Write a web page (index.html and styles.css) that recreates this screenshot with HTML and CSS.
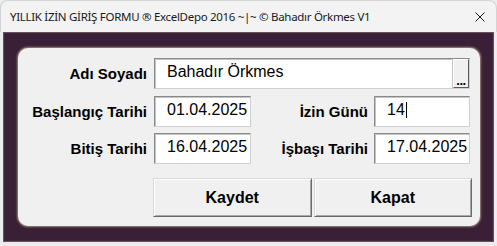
FILE: index.html
```html
<!DOCTYPE html>
<html lang="tr">
<head>
    <meta charset="UTF-8">
    <title>YILLIK İZİN GİRİŞ FORMU</title>
    <link rel="stylesheet" href="styles.css">
</head>
<body>
    <div class="window">
        <div class="titlebar">
            <span class="title">YILLIK İZİN GİRİŞ FORMU ® ExcelDepo 2016 ~|~ © Bahadır Örkmes V1</span>
            <svg class="close" width="10" height="10" viewBox="0 0 10 10">
                <path d="M0.5 0.5 L9.5 9.5 M9.5 0.5 L0.5 9.5" stroke="#1a1a1a" stroke-width="1" fill="none"/>
            </svg>
        </div>

        <div class="frame">
            <div class="panel">
                <div class="form">
                    <label class="lbl">Adı Soyadı</label>
                    <div class="field field-name">
                        <span>Bahadır Örkmes</span>
                        <span class="dots">...</span>
                    </div>

                    <label class="lbl">Başlangıç Tarihi</label>
                    <div class="field">01.04.2025</div>
                    <label class="lbl lbl-right">İzin Günü</label>
                    <div class="field">14<span class="caret"></span></div>

                    <label class="lbl">Bitiş Tarihi</label>
                    <div class="field">16.04.2025</div>
                    <label class="lbl lbl-right">İşbaşı Tarihi</label>
                    <div class="field">17.04.2025</div>

                    <div class="actions">
                        <button class="btn">Kaydet</button>
                        <button class="btn">Kapat</button>
                    </div>
                </div>
            </div>
        </div>
    </div>
</body>
</html>
```

FILE: styles.css
```css
* {
    margin: 0;
    padding: 0;
    box-sizing: border-box;
}

body {
    width: 497px;
    height: 246px;
    background: #ececec;
    overflow: hidden;
    font-family: "Liberation Sans", Arial, sans-serif;
}

.window {
    width: 497px;
    height: 246px;
}

/* title bar */
.titlebar {
    height: 32px;
    display: flex;
    align-items: center;
    padding: 0 11px 0 9px;
    background: #f3f3f3;
    border-radius: 8px 8px 0 0;
    border: 1px solid #d4d4d4;
    border-bottom: none;
}

.title {
    flex: 1;
    font-family: "Noto Sans", "Open Sans", sans-serif;
    font-size: 11.5px;
    letter-spacing: -0.3px;
    color: #1a1a1a;
    white-space: nowrap;
    padding-bottom: 1px;
}

.close {
    display: block;
}

/* dark frame */
.frame {
    height: 210px;
    margin: 0 3px;
    padding: 16px 14px 16px 15px;
    background: #3a2036;
    box-shadow: inset 0 0 1px 1px #6b5560;
}

.panel {
    height: 178px;
    background: #f0f0f0;
    border-radius: 10px;
    padding: 10px 0 0 10px;
    box-shadow: 0 0 2px 1px #9c8a7c;
}

.form {
    display: grid;
    grid-template-columns: 126px 97px 123px 96px;
    grid-template-rows: 32px 31px 31px auto;
    row-gap: 6px;
}

.lbl {
    display: flex;
    align-items: center;
    justify-content: flex-end;
    height: 31px;
    padding-right: 7px;
    font-size: 15px;
    font-weight: bold;
    color: #000;
    white-space: nowrap;
}

.lbl-right {
    padding-right: 6px;
}

.field {
    display: flex;
    align-items: center;
    height: 31px;
    padding: 0 0 3px 12px;
    background: #fff;
    border: 1px solid;
    border-color: #8a8a8a #d0d0d0 #d0d0d0 #8a8a8a;
    box-shadow: inset 1px 1px 0 #c4c4c4;
    font-size: 16px;
    color: #000;
}

.field-name {
    grid-column: 2 / 5;
    padding-bottom: 0;
    align-items: stretch;
}

.field-name span:first-child {
    display: flex;
    align-items: center;
    padding-bottom: 3px;
}

.dots {
    margin-left: auto;
    width: 16px;
    display: flex;
    align-items: flex-end;
    justify-content: center;
    background: #f0f0f0;
    border: 1px solid;
    border-color: #fff #5a5a5a #5a5a5a #fff;
    box-shadow: -1px 0 0 #c8c8c8;
    font-size: 13px;
    font-weight: bold;
    line-height: 13px;
    letter-spacing: -0.5px;
    padding-bottom: 0;
}

.caret {
    display: inline-block;
    width: 1px;
    height: 16px;
    margin-left: 1px;
    background: #000;
}

.actions {
    grid-column: 2 / 5;
    display: flex;
    gap: 2px;
    width: 319px;
    margin: 8px 0 0 -1px;
}

.btn {
    width: 159px;
    height: 39px;
    background: #f0f0f0;
    border: 1px solid;
    border-color: #d8d8d8 #6a6a6a #6a6a6a #d8d8d8;
    box-shadow: inset 1px 1px 0 #fff, inset -1px -1px 0 #a8a8a8;
    font-family: "Liberation Sans", Arial, sans-serif;
    font-size: 16px;
    font-weight: bold;
    color: #000;
}
```
